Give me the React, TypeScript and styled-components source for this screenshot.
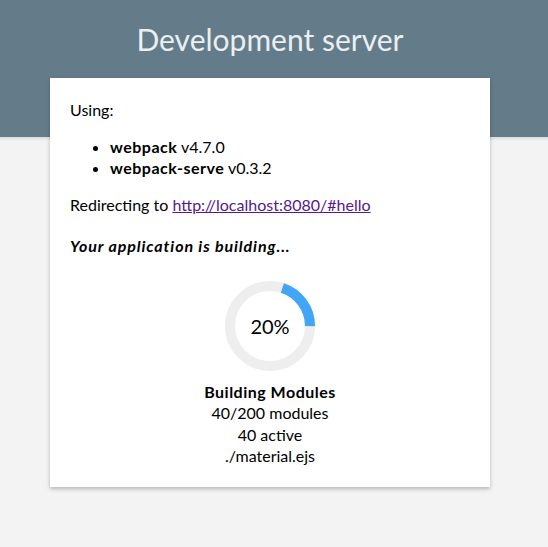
import React from "react";
import styled, { createGlobalStyle } from "styled-components";

const Global = createGlobalStyle`
  html, body { margin: 0; padding: 0; }
  body {
    background: #f3f3f3;
    font-family: "Segoe UI", Lato, "Noto Sans", sans-serif;
    color: #000;
  }
`;

const Page = styled.div`
  min-height: 547px;
  padding-right: 8px;
  background: linear-gradient(to bottom, #647c89 0, #647c89 137px, #dcdcdc 137px, #f3f3f3 141px, #f3f3f3 100%);
`;

const Header = styled.header`
  display: flex;
  justify-content: center;
  padding-top: 19px;
  box-sizing: border-box;
  height: 78px;
`;

const Title = styled.h1`
  margin: 0;
  font-weight: 400;
  font-size: 30px;
  line-height: 40px;
  color: #e9eff2;
`;

const Card = styled.main`
  width: 440px;
  box-sizing: border-box;
  margin: 0 auto;
  background: #fff;
  padding: 21px 20px 20px;
  box-shadow: 0 2px 4px rgba(0, 0, 0, 0.25);
  font-size: 16px;
  line-height: 21px;
`;

const Para = styled.p<{ $gap?: number }>`
  margin: 0 0 ${(p) => p.$gap ?? 16}px;
`;

const List = styled.ul`
  margin: 0 0 16px;
  padding-left: 40px;
`;

const Item = styled.li`
  b { font-weight: 700; letter-spacing: 0.5px; }
`;

const Link = styled.a`
  color: #551a8b;
  text-decoration: underline;
`;

const Status = styled.p`
  margin: 0 0 24px;
  font-weight: 700;
  font-style: italic;
  letter-spacing: 0.9px;
`;

const Progress = styled.section`
  display: flex;
  flex-direction: column;
  align-items: center;
  text-align: center;
`;

const Ring = styled.div`
  position: relative;
  width: 90px;
  height: 90px;
  margin-top: 1px;
  margin-bottom: 10px;
`;

const Percent = styled.span`
  position: absolute;
  inset: 0;
  display: flex;
  align-items: center;
  justify-content: center;
  font-size: 20px;
`;

const StepTitle = styled.div`
  font-weight: 700;
  letter-spacing: 0.5px;
`;

const Line = styled.div`
  line-height: 21.5px;
`;

export default function App() {
  const r = 40;
  const c = 2 * Math.PI * r;
  const pct = 0.2;
  return (
    <>
      <Global />
      <Page>
        <Header>
          <Title>Development server</Title>
        </Header>
        <Card>
          <Para>Using:</Para>
          <List>
            <Item>
              <b>webpack</b> v4.7.0
            </Item>
            <Item>
              <b>webpack-serve</b> v0.3.2
            </Item>
          </List>
          <Para $gap={20}>
            Redirecting to <Link href="#hello">http://localhost:8080/#hello</Link>
          </Para>
          <Status>Your application is building...</Status>
          <Progress>
            <Ring>
              <svg width="90" height="90" viewBox="0 0 90 90">
                <circle cx="45" cy="45" r={r} fill="none" stroke="#eeeeee" strokeWidth="10" />
                <circle
                  cx="45"
                  cy="45"
                  r={r}
                  fill="none"
                  stroke="#42a5f5"
                  strokeWidth="10"
                  strokeDasharray={`${c * pct} ${c}`}
                  transform="rotate(-72 45 45)"
                />
              </svg>
              <Percent>20%</Percent>
            </Ring>
            <StepTitle>Building Modules</StepTitle>
            <Line>40/200 modules</Line>
            <Line>40 active</Line>
            <Line>./material.ejs</Line>
          </Progress>
        </Card>
      </Page>
    </>
  );
}
